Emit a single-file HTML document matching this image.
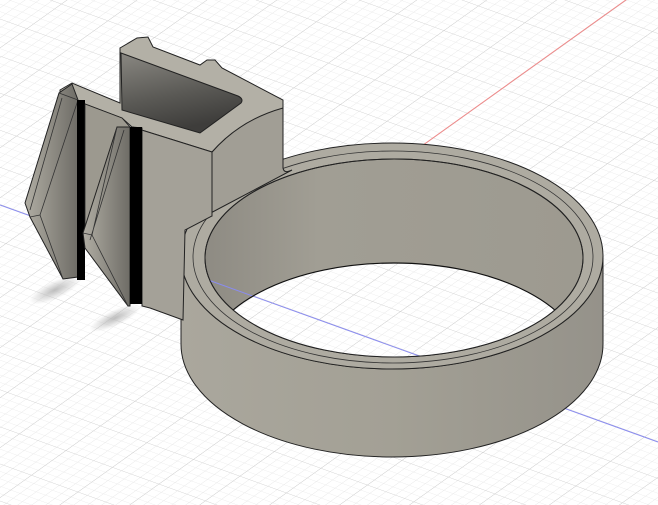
<!DOCTYPE html>
<html><head><style>
html,body{margin:0;padding:0;background:#fff;}
svg{display:block;}
</style></head><body>
<svg width="658" height="505" viewBox="0 0 658 505" xmlns="http://www.w3.org/2000/svg">
<defs>
<pattern id="g1" width="10" height="10" patternUnits="userSpaceOnUse" patternTransform="matrix(0.93,0.335,0.69,-0.493,226,286)">
<path d="M0 0H10M0 0V10" stroke="#e6e6e6" stroke-width="1" fill="none"/>
</pattern>
<pattern id="g2" width="50" height="50" patternUnits="userSpaceOnUse" patternTransform="matrix(0.93,0.335,0.69,-0.493,226,286)">
<path d="M0 0H50M0 0V50" stroke="#cbcbcb" stroke-width="1" fill="none"/>
</pattern>
<linearGradient id="wall" x1="0" x2="1" y1="0" y2="0">
<stop offset="0" stop-color="#aaa79d"/><stop offset="0.5" stop-color="#a3a095"/><stop offset="1" stop-color="#95928a"/>
</linearGradient>
<linearGradient id="inner" x1="0" x2="1" y1="0" y2="0">
<stop offset="0" stop-color="#8e8b83"/><stop offset="0.3" stop-color="#a19e94"/><stop offset="1" stop-color="#9d9a90"/>
</linearGradient>
<linearGradient id="hole" x1="0" x2="0.3" y1="0" y2="1">
<stop offset="0" stop-color="#8a8882"/><stop offset="0.6" stop-color="#5a5955"/><stop offset="1" stop-color="#3e3d3b"/>
</linearGradient>
<linearGradient id="fin" x1="0" x2="1" y1="0" y2="0">
<stop offset="0" stop-color="#b0ada3"/><stop offset="1" stop-color="#6e6c66"/>
</linearGradient>
<clipPath id="inE"><ellipse cx="394" cy="258" rx="189" ry="99"/></clipPath>
<radialGradient id="sh" cx="0.5" cy="0.5" r="0.5"><stop offset="0" stop-color="#bdbdbd"/><stop offset="1" stop-color="#bdbdbd" stop-opacity="0"/></radialGradient>
</defs>
<rect width="658" height="505" fill="#fff"/>
<rect width="658" height="505" fill="url(#g1)"/>
<rect width="658" height="505" fill="url(#g2)"/>
<line x1="0" y1="205" x2="658" y2="442" stroke="#8a8cf0" stroke-width="1"/>
<line x1="226" y1="286" x2="658" y2="-23" stroke="#f08a8a" stroke-width="1"/>
<ellipse cx="55" cy="290" rx="28" ry="9" fill="url(#sh)" transform="rotate(-25 55 290)"/>
<ellipse cx="115" cy="318" rx="28" ry="8" fill="url(#sh)" transform="rotate(-25 115 318)"/>

<!-- ring outer wall -->
<path d="M181 256 L181 344 A211 113 0 0 0 603 344 L603 256 A211 113 0 0 1 181 256 Z" fill="url(#wall)" stroke="#222" stroke-width="1"/>
<ellipse cx="392" cy="256" rx="211" ry="113" fill="#aeaba1" stroke="#222" stroke-width="1"/>
<ellipse cx="393" cy="257" rx="200" ry="106" fill="none" stroke="#333" stroke-width="0.8"/>
<ellipse cx="394" cy="258" rx="189" ry="99" fill="url(#inner)" stroke="#222" stroke-width="1"/>
<g clip-path="url(#inE)">
<ellipse cx="394" cy="362" rx="189" ry="99" fill="#fff"/>
<ellipse cx="394" cy="362" rx="189" ry="99" fill="url(#g1)"/>
<ellipse cx="394" cy="362" rx="189" ry="99" fill="url(#g2)"/>
<line x1="0" y1="205" x2="658" y2="442" stroke="#8a8cf0" stroke-width="1"/>
<ellipse cx="394" cy="362" rx="189" ry="99" fill="none" stroke="#111" stroke-width="1.2"/>
</g>
<ellipse cx="394" cy="258" rx="189" ry="99" fill="none" stroke="#222" stroke-width="1"/>

<!-- block right face -->
<path d="M212 152 Q240 120 283 106 L283 168 Q284 174 292 170 L205 216 L212 216 Z" fill="#a19e95" stroke="#222" stroke-width="1"/>
<!-- light top -->
<path d="M60 90 L72 83 L120 103 L120 48 L137 38 L148 37 L153 47 L200 65 L207 60 L215 60 L222 68 L283 100 L283 108 Q240 120 212 152 L132 127 L122 118 L85 104 L60 98 Z" fill="#b3b0a6" stroke="#222" stroke-width="1"/>
<!-- dark slot -->
<path d="M121 53 L238 96 Q244 99 241 103 L200 133 L122 110 Z" fill="url(#hole)" stroke="#222" stroke-width="1"/>
<!-- column front face -->
<path d="M132 127 L212 152 L212 216 L185 230 L183 320 L150 308 L142 306 L142 128 Z" fill="#a4a198" stroke="#222" stroke-width="1"/>
<line x1="212" y1="152" x2="212" y2="216" stroke="#222"/>
<!-- fin 1 -->
<path d="M72 84 L59 93 L25 203 L30 217 L63 279 L78 277 L78 100 Z" fill="url(#fin)" stroke="#222" stroke-width="1"/>
<path d="M59 93 L78 100 L40 215 L63 279 M30 217 L40 215 M62 98 L30 210" fill="none" stroke="#333" stroke-width="0.8"/>
<rect x="77" y="100" width="8" height="180" fill="#000"/>
<path d="M85 104 L122 118 L130 127 L118 232 L85 248 Z" fill="#9c998f" stroke="#222" stroke-width="0.8"/>
<!-- fin 2 -->
<path d="M117 127 L130 127 L130 306 L128 306 L85 248 L83 233 Z" fill="url(#fin)" stroke="#222" stroke-width="1"/>
<path d="M117 127 L92 235 L128 306 M83 233 L92 235 M124 130 L90 240" fill="none" stroke="#333" stroke-width="0.8"/>
<rect x="130" y="127" width="12" height="177" fill="#000"/>
</svg>
</body></html>
